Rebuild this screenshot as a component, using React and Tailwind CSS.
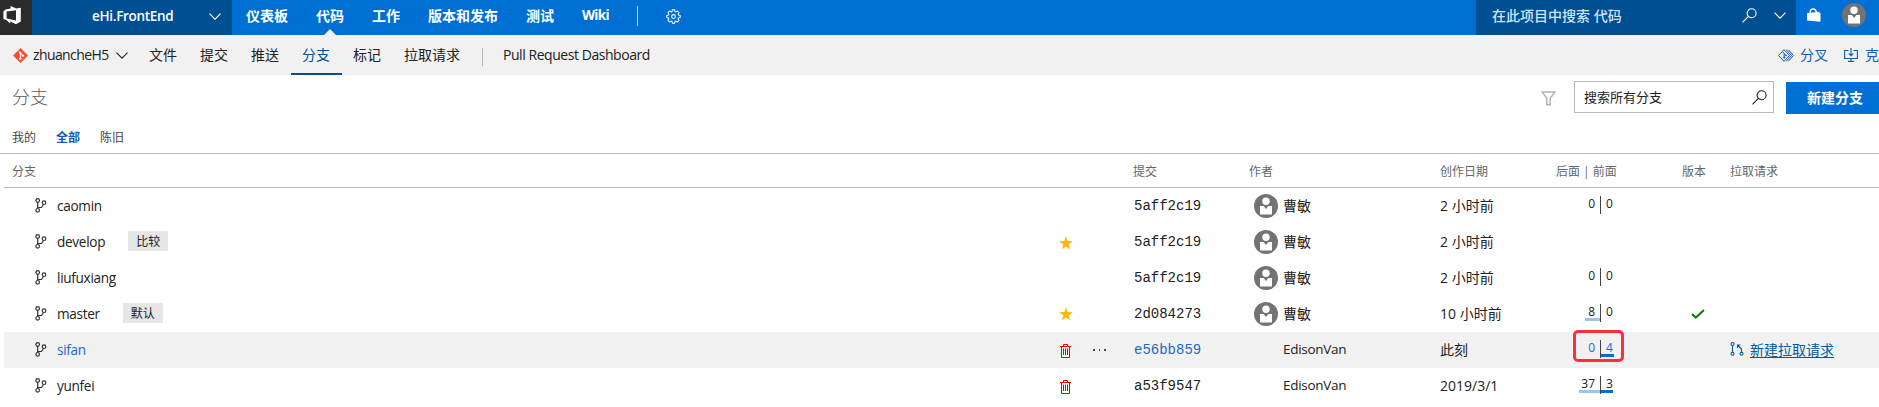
import React from "react";

const Chevron = ({ className }) => (
  <svg className={"shrink-0 " + className} width="12" height="7" viewBox="0 0 12 7" fill="none" stroke="currentColor" strokeWidth="1.1">
    <path d="M.5.6 6 6.1 11.5.6" />
  </svg>
);

const SearchIcon = ({ className = "" }) => (
  <svg className={"shrink-0 " + className} width="15" height="15" viewBox="0 0 15 15" fill="none" stroke="currentColor" strokeWidth="1.1">
    <circle cx="9.6" cy="5.2" r="4.5" />
    <path d="M6.4 8.4.5 14.3" />
  </svg>
);

const Avatar = ({ className = "" }) => (
  <svg className={"shrink-0 " + className} width="24" height="24" viewBox="0 0 24 24">
    <circle cx="12" cy="12" r="12" fill="#737373" />
    <circle cx="12" cy="7.2" r="3.7" fill="#fff" />
    <path d="M6 12h3.6l2.4 3 2.4-3H18v8.500H6z" fill="#fff" />
  </svg>
);

const LogoIcon = () => (
  <svg width="19" height="19" viewBox="0 0 19 19">
    <path
      fill="#fff"
      fillRule="evenodd"
      d="M7.6 0 13.2 2.4 17.8 1.7V15.4L13 18.2 7.2 15.6V17.6L3.4 13.9.4 13V5.2L2.6 3.6 7.6 2.6zM3.6 5.6V12.6L13 14.4V4.3z"
    />
  </svg>
);

const GearIcon = () => (
  <svg className="shrink-0" width="15" height="15" viewBox="0 0 15 15" fill="none" stroke="#fff" strokeWidth="1.05">
    <path
      strokeLinejoin="round"
      d="M6.4.8h2.2l.4 1.7 1 .4 1.5-.9 1.5 1.5-.9 1.5.4 1 1.7.4v2.2l-1.7.4-.4 1 .9 1.5-1.5 1.5-1.5-.9-1 .4-.4 1.7H6.4L6 12.5l-1-.4-1.5.9L2 11.5l.9-1.5-.4-1L.8 8.600V6.400L2.500 6l.4-1L2 3.500 3.500 2l1.500.9 1-.4z"
    />
    <circle cx="7.5" cy="7.5" r="1.9" />
  </svg>
);

const BagIcon = () => (
  <svg width="14" height="14" viewBox="0 0 14 14">
    <path d="M0 5.200 11.500 3.800 13.500 5.200V13.700L0 12.400z" fill="#fff" />
    <path d="M3.200 5.500V3.200Q3.400 1.200 6 1Q8.800.8 9.400 4.400" fill="none" stroke="#fff" strokeWidth="1.3" />
  </svg>
);

const GitIcon = () => (
  <svg className="shrink-0" width="15" height="15" viewBox="0 0 15 15">
    <path d="M7.500.3 14.700 7.500 7.500 14.700.3 7.500z" fill="#f04e33" stroke="#f04e33" strokeWidth=".6" strokeLinejoin="round" />
    <path d="M5.300 2.700 7.300 4.800V10.500M7.300 5 9.700 7.400" stroke="#fff" strokeWidth="1" fill="none" />
    <circle cx="7.300" cy="4.900" r="1.100" fill="#fff" />
    <circle cx="7.300" cy="10.500" r="1.200" fill="#fff" />
    <circle cx="9.900" cy="7.600" r="1.200" fill="#fff" />
  </svg>
);

const ForkIcon = () => (
  <svg className="shrink-0" width="16" height="13" viewBox="0 0 16 13" fill="none" stroke="#0f5bb5" strokeWidth="1">
    <path d="M6 .7 11.500 6.500 6 12.300.6 6.500zM8.200.7 13.500 6.500 8.200 12.300M10.300.7 15.400 6.500 10.300 12.300M4.900 3 6.200 4.600V9M6.200 4.600 8 6.500" />
    <circle cx="6.200" cy="8.700" r=".6" />
    <circle cx="8" cy="6.600" r=".5" />
  </svg>
);

const CloneIcon = () => (
  <svg className="shrink-0" width="14" height="14" viewBox="0 0 14 14" fill="none" stroke="#0f5bb5" strokeWidth="1.1">
    <path d="M4.500 2.500H.6V10.500H13.400V2.500H9.500M7 0V7.500M4.700 5.300 7 7.600 9.300 5.300M7 10.500V13.400M4 13.400H10" />
  </svg>
);

const FunnelIcon = () => (
  <svg width="15" height="15" viewBox="0 0 15 15" fill="none" stroke="#b3b3b3" strokeWidth="1.500">
    <path d="M1 .9H14L9.200 7.300V13.800H5.800V7.300z" />
  </svg>
);

const BranchIcon = () => (
  <svg className="shrink-0" width="12" height="15" viewBox="0 0 12 15" fill="none" stroke="#333" strokeWidth="1.200">
    <circle cx="2.700" cy="2.500" r="1.800" />
    <circle cx="2.700" cy="12.300" r="1.800" />
    <circle cx="9" cy="4.700" r="1.800" />
    <path d="M2.700 4.300V10.500M2.700 9.500H6.500L8.500 6.500" />
  </svg>
);

const StarIcon = ({ className }) => (
  <svg className={className} width="14" height="14" viewBox="0 0 14 14">
    <path d="M7 .2 8.700 5.100 13.800 5.200 9.700 8.400 11.200 13.400 7 10.400 2.800 13.400 4.300 8.400.2 5.200 5.300 5.100z" fill="#ffb60a" />
  </svg>
);

const TrashIcon = ({ className }) => (
  <svg className={className} width="11" height="14" viewBox="0 0 11 14" fill="none" stroke="#da0a00" strokeWidth="1">
    <path d="M0 2.500H11M3.500 2.500V.5H7.500V2.500M1.500 2.500V13.500H9.500V2.500M3.500 4.500V11M5.500 4.500V11M7.500 4.500V11" />
  </svg>
);

const CheckIcon = () => (
  <svg width="14" height="10" viewBox="0 0 14 10" fill="none" stroke="#107c10" strokeWidth="2">
    <path d="M1 5 4.800 8.600 13 .9" />
  </svg>
);

const PullIcon = () => (
  <svg className="shrink-0" width="14" height="14" viewBox="0 0 14 14" fill="none" stroke="#005a9e" strokeWidth="1.1">
    <circle cx="2.500" cy="2" r="1.500" />
    <circle cx="2.500" cy="11.800" r="1.500" />
    <circle cx="11.500" cy="11.800" r="1.500" />
    <path d="M2.500 3.500V10.300M11.500 10.300V7L8 3.500M7.500 6V3H10.500" />
  </svg>
);

const hubs = ["仪表板", "代码", "工作", "版本和发布", "测试", "Wiki"];
const tabs = ["文件", "提交", "推送", "分支", "标记", "拉取请求"];

const rows = [
  { name: "caomin", sha: "5aff2c19", author: "曹敏", avatar: true, date: "2 小时前", behind: 0, ahead: 0 },
  { name: "develop", tag: "比较", star: "mt-px", sha: "5aff2c19", author: "曹敏", avatar: true, date: "2 小时前" },
  { name: "liufuxiang", sha: "5aff2c19", author: "曹敏", avatar: true, date: "2 小时前", behind: 0, ahead: 0 },
  { name: "master", tag: "默认", star: "-mt-px", sha: "2d084273", author: "曹敏", avatar: true, date: "10 小时前", behind: 8, ahead: 0, behindBar: 15, built: true },
  { name: "sifan", active: true, trash: true, sha: "e56bb859", author: "EdisonVan", date: "此刻", behind: 0, ahead: 4, aheadBar: 13 },
  { name: "yunfei", trash: true, sha: "a53f9547", author: "EdisonVan", date: "2019/3/1", behind: 37, ahead: 3, behindBar: 21, aheadBar: 12 },
];

const grid = "grid grid-cols-[1041px_89px_115px_191px_112px_130px_48px_1fr]";

function Counts({ row }) {
  if (row.behind === undefined) return <div />;
  return (
    <div className={"relative flex h-9 pl-[27px] text-[12px] leading-none " + (row.active ? "text-[#1f69c1]" : "text-[#222]")}>
      <div className="flex w-[21px] flex-col items-end pt-[10px]">
        <span className="h-3 pr-[5px]">{row.behind}</span>
        <span className="h-[3px] bg-[#9ac5f0]" style={{ width: row.behindBar || 0 }} />
      </div>
      <div className="mt-2 h-[18px] w-px bg-[#444]" />
      <div className="flex flex-col items-start pt-[10px]">
        <span className="h-3 pl-[5px]">{row.ahead}</span>
        <span className="h-[3px] bg-[#0070d6]" style={{ width: row.aheadBar || 0 }} />
      </div>
      {row.active && <div className="absolute -top-[2px] left-[21px] h-[32px] w-[51px] rounded-[5px] border-[3px] border-[#ff2e3e]" />}
    </div>
  );
}

function BranchRow({ row }) {
  return (
    <div className={grid + " h-9 text-[14px] leading-[35px] text-[#222] " + (row.active ? "bg-[#f1f1f1]" : "")}>
      <div className="flex pl-[31px]">
        <span className="mt-[10px] flex h-[15px]">
          <BranchIcon />
        </span>
        <span className={"ml-[10px] text-[13.6px] tracking-[-0.3px] " + (row.active ? "text-[#1f69c1]" : "")}>{row.name}</span>
        {row.tag && <span className="mt-[7px] ml-[23px] h-5 w-10 bg-[#e6e6e6] text-center text-[12px] leading-[21px]">{row.tag}</span>}
      </div>
      <div className="flex items-center pl-[14px]">
        {row.star && <StarIcon className={row.star} />}
        {row.trash && <TrashIcon className="ml-[1px] mt-[2px]" />}
        {row.active && (
          <span className="ml-[22px] flex gap-[4px]">
            <i className="size-[1.500px] bg-[#444]" />
            <i className="size-[1.500px] bg-[#444]" />
            <i className="size-[1.500px] bg-[#444]" />
          </span>
        )}
      </div>
      <div className={"font-['Liberation_Mono',monospace] text-[14px] leading-[36px] " + (row.active ? "text-[#1f69c1]" : "")}>{row.sha}</div>
      <div className="flex pl-[5px]">
        {row.avatar ? <Avatar className="mt-[6px]" /> : <span className="w-6" />}
        <span className={row.avatar ? "ml-[5px]" : "ml-[5px] text-[13.5px] tracking-[-0.3px]"}>{row.author}</span>
      </div>
      <div>{row.date}</div>
      <Counts row={row} />
      <div className="flex items-center pl-[9px]">{row.built && <CheckIcon />}</div>
      <div className="flex">
        {row.active && (
          <>
            <span className="mt-[10px] flex h-[14px]">
              <PullIcon />
            </span>
            <a className="ml-[6px] text-[#005a9e] underline underline-offset-2">新建拉取请求</a>
          </>
        )}
      </div>
    </div>
  );
}

export default function App() {
  return (
    <div className="h-[407px] w-[1879px] overflow-hidden bg-white font-['Open_Sans','Noto_Sans_CJK_SC',sans-serif] text-[14px] whitespace-nowrap text-[#222]">
      <header className="flex h-[35px] bg-[#006fd4] font-semibold text-white">
        <div className="w-8 bg-[#2b2b2b] pt-[6px] pl-[3px]">
          <LogoIcon />
        </div>
        <div className="flex w-[200px] items-center bg-[#004f93] pb-[3px] pl-[60px]">
          <span className="w-[80px] text-[13.500px] tracking-[-0.3px]">eHi.FrontEnd</span>
          <Chevron className="ml-[37px]" />
        </div>
        <nav className="flex items-center gap-7 pb-[3px] pl-[14px]">
          {hubs.map((h) => (
            <span key={h} className={"relative -mt-px font-bold " + (h === "Wiki" ? "w-[27px] text-[13.5px] tracking-[-0.7px]" : "")}>
              {h}
              {h === "代码" && (
                <svg className="absolute top-[24px] left-[8px]" width="12" height="6" viewBox="0 0 12 6">
                  <path d="M6 0 12 6H0z" fill="#f1f1f1" />
                </svg>
              )}
            </span>
          ))}
          <span className="h-5 w-px bg-white/70" />
          <GearIcon />
        </nav>
        <div className="ml-auto flex w-[320px] items-center bg-[#004f93] pb-[4px] pl-4">
          <span className="w-[250px] font-medium text-[#d0e4f6]">在此项目中搜索 代码</span>
          <SearchIcon />
          <Chevron className="ml-[17px]" />
        </div>
        <div className="flex w-[83px] pl-[11px]">
          <div className="w-[35px] pt-2">
            <BagIcon />
          </div>
          <Avatar className="mt-[3px]" />
        </div>
      </header>

      <div className="flex h-10 items-center bg-[#f1f1f1]">
        <div className="flex items-center pl-[13px]">
          <GitIcon />
          <span className="ml-[5px] w-[76px] pb-px tracking-[-0.6px]">zhuancheH5</span>
          <Chevron className="ml-[7px]" />
        </div>
        <nav className="ml-[10px] flex h-10 leading-[39px]">
          {tabs.map((t) => (
            <span key={t} className={"pr-3 pl-[11px] " + (t === "分支" ? "border-b-2 border-[#004f93] text-[#004f93]" : "")}>
              {t}
            </span>
          ))}
        </nav>
        <span className="mt-1 ml-[10px] h-[18px] w-px bg-[#b8b8b8]" />
        <span className="ml-[20px] pb-px tracking-[-0.45px]">Pull Request Dashboard</span>
        <div className="ml-auto flex w-[101px] items-center overflow-hidden text-[#0f5bb5]">
          <ForkIcon />
          <span className="mr-[16px] ml-[6px] pb-px">分叉</span>
          <CloneIcon />
          <span className="ml-[7px] pb-px">克隆</span>
        </div>
      </div>

      <div className="flex h-[45px] pl-3">
        <h1 className="text-[18px] leading-[44px] font-light text-[#5c5c5c]">分支</h1>
        <div className="ml-auto flex h-full">
          <div className="w-[33px] pt-[16px]">
            <FunnelIcon />
          </div>
          <div className="mt-[6px] flex h-8 w-[200px] items-center justify-between border border-[#b8b8b8] pr-[6px] pl-[9px] text-[13px]">
            <span className="pt-0.5">搜索所有分支</span>
            <SearchIcon />
          </div>
          <div className="mt-[7px] ml-3 h-8 w-[93px] bg-[#006fd4] pl-[21px] leading-[32px] font-bold text-white">新建分支</div>
        </div>
      </div>
      <div className="flex h-[34px] gap-5 border-b border-[#b8b8b8] pl-3 text-[12px] leading-[36px] text-[#444]">
        <span className="w-6">我的</span>
        <span className="w-6 font-bold text-[#0f5bb5]">全部</span>
        <span className="w-6">陈旧</span>
      </div>

      <div className="pl-1">
        <div className={grid + " h-[34px] border-b border-[#b8b8b8] text-[12px] leading-[35px] text-[#666]"}>
          <div className="pl-2">分支</div>
          <div />
          <div className="-ml-px">提交</div>
          <div>作者</div>
          <div>创作日期</div>
          <div className="pl-1">后面 | 前面</div>
          <div>版本</div>
          <div>拉取请求</div>
        </div>
        {rows.map((r) => (
          <BranchRow key={r.name} row={r} />
        ))}
      </div>
    </div>
  );
}
